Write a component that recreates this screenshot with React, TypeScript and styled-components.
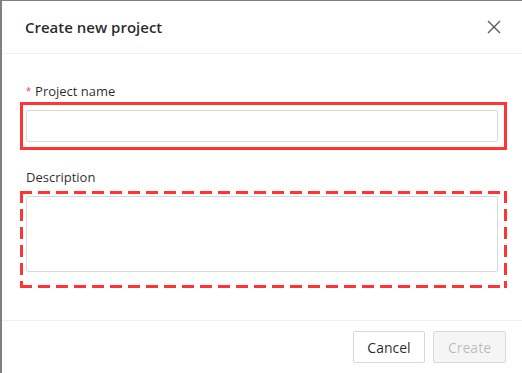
import React from "react";
import styled, { createGlobalStyle, css } from "styled-components";

const Global = createGlobalStyle`
  html, body { margin: 0; padding: 0; }
  body { background: #808080; font-family: "Open Sans", "Noto Sans", sans-serif; }
  * { box-sizing: border-box; }
`;

const Backdrop = styled.div`
  min-height: 373px;
  padding: 1px 0 0 2px;
  display: flex;
`;

const Modal = styled.div`
  flex: 1;
  background: #fff;
  height: 372px;
  display: flex;
  flex-direction: column;
`;

const Header = styled.div`
  height: 53px;
  flex: none;
  display: flex;
  align-items: center;
  justify-content: space-between;
  padding: 0 20px 0 23px;
  border-bottom: 1px solid #f0f0f0;
`;

const Title = styled.h2`
  margin: 0;
  font-size: 15px;
  font-weight: 600;
  color: rgba(0, 0, 0, 0.85);
`;

const CloseButton = styled.button`
  border: 0;
  background: none;
  padding: 0;
  width: 16px;
  height: 16px;
  display: flex;
  align-items: center;
  justify-content: center;
  cursor: pointer;
`;

const Body = styled.div`
  flex: 1;
  padding: 26px 24px 0 24px;
  display: flex;
  flex-direction: column;
`;

const Label = styled.label`
  display: block;
  height: 22px;
  line-height: 22px;
  font-size: 13px;
  color: rgba(0, 0, 0, 0.85);
`;

const Required = styled.span`
  color: #ff4d4f;
  margin-right: 4px;
  font-family: "Liberation Sans", sans-serif;
  font-size: 13px;
`;

const RED = "#ff3535";

const dashedEdges = css`
  border: 3px solid transparent;
  background-origin: border-box;
  background-clip: border-box;
  background-image:
    linear-gradient(90deg, ${RED} 12px, transparent 12px),
    linear-gradient(90deg, ${RED} 12px, transparent 12px),
    linear-gradient(180deg, ${RED} 12px, transparent 12px),
    linear-gradient(180deg, ${RED} 12px, transparent 12px);
  background-size: 18px 3px, 18px 3px, 3px 18px, 3px 18px;
  background-position: left top, left bottom, left top, right top;
  background-repeat: repeat-x, repeat-x, repeat-y, repeat-y;
`;

const Frame = styled.div<{ $dashed?: boolean; $pt: number; $pb: number }>`
  margin: 0 -9px 0 -6px;
  ${(p) => (p.$dashed ? dashedEdges : css`border: 3px solid ${RED};`)}
  padding: ${(p) => p.$pt}px 6px ${(p) => p.$pb}px 3px;
`;

const Input = styled.input`
  display: block;
  width: 100%;
  height: 32px;
  border: 1px solid #d9d9d9;
  border-radius: 2px;
  padding: 4px 11px;
  font: inherit;
  font-size: 14px;
  outline: none;
  background: #fff;
`;

const TextArea = styled.textarea`
  display: block;
  width: 100%;
  height: 76px;
  border: 1px solid #d9d9d9;
  border-radius: 2px;
  padding: 4px 11px;
  font: inherit;
  font-size: 14px;
  outline: none;
  resize: none;
  background: #fff;
`;

const Gap = styled.div<{ $h: number }>`
  height: ${(p) => p.$h}px;
  flex: none;
`;

const Footer = styled.div`
  flex: none;
  border-top: 1px solid #f0f0f0;
  padding: 10px 16px 10px;
  display: flex;
  justify-content: flex-end;
  gap: 8px;
`;

const Button = styled.button<{ $disabled?: boolean }>`
  height: 32px;
  width: ${(p) => (p.$disabled ? 73 : 72)}px;
  border: 1px solid #d9d9d9;
  border-radius: 2px;
  background: ${(p) => (p.$disabled ? "#f5f5f5" : "#fff")};
  color: ${(p) => (p.$disabled ? "rgba(0,0,0,0.25)" : "rgba(0,0,0,0.85)")};
  font: inherit;
  font-size: 14px;
  padding: 0;
  cursor: ${(p) => (p.$disabled ? "not-allowed" : "pointer")};
`;

export default function App() {
  return (
    <>
      <Global />
      <Backdrop>
        <Modal>
          <Header>
            <Title>Create new project</Title>
            <CloseButton aria-label="Close">
              <svg width="14" height="14" viewBox="0 0 14 14">
                <path d="M1 1L13 13M13 1L1 13" stroke="#555" strokeWidth="1.3" fill="none" />
              </svg>
            </CloseButton>
          </Header>
          <Body>
            <Label>
              <Required>*</Required>Project name
            </Label>
            <Frame $pt={5} $pb={5}>
              <Input />
            </Frame>
            <Gap $h={16} />
            <Label>Description</Label>
            <Gap $h={3} />
            <Frame $dashed $pt={2} $pb={13}>
              <TextArea />
            </Frame>
          </Body>
          <Footer>
            <Button>Cancel</Button>
            <Button $disabled disabled>
              Create
            </Button>
          </Footer>
        </Modal>
      </Backdrop>
    </>
  );
}
